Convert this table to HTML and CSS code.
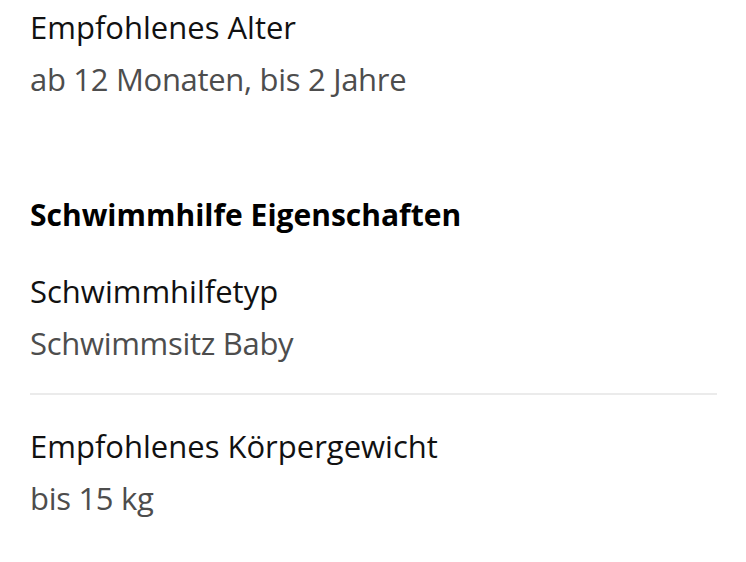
FILE: index.html
```html
<!DOCTYPE html>
<html lang="de">
<head>
<meta charset="utf-8">
<link rel="stylesheet" href="styles.css">
</head>
<body>
<div class="page">
  <div class="attr">
    <div class="label">Empfohlenes Alter</div>
    <div class="value">ab 12 Monaten, bis 2 Jahre</div>
  </div>
  <section class="group">
    <h2 class="group-title">Schwimmhilfe Eigenschaften</h2>
    <div class="attr">
      <div class="label">Schwimmhilfetyp</div>
      <div class="value">Schwimmsitz Baby</div>
    </div>
    <div class="attr attr-divided">
      <div class="label">Empfohlenes Körpergewicht</div>
      <div class="value">bis 15 kg</div>
    </div>
  </section>
</div>
</body>
</html>
```

FILE: styles.css
```css
html, body {
  margin: 0;
  padding: 0;
  background: #fff;
}
.page {
  padding: 1px 29px 0 30px;
  font-family: "Open Sans", "Noto Sans", sans-serif;
}
.attr {
  display: flex;
  flex-direction: column;
}
.label {
  font-size: 31px;
  line-height: 52px;
  color: #111;
}
.value {
  font-size: 31px;
  line-height: 52px;
  letter-spacing: -0.3px;
  color: #4d4d4d;
}
.group {
  margin-top: 84px;
}
.group-title {
  margin: 0 0 24px;
  font-size: 30px;
  line-height: 52px;
  font-weight: 700;
  color: #000;
}
.attr-divided {
  border-top: 2px solid #ebebeb;
  margin-top: 24px;
  padding-top: 25px;
}
```
